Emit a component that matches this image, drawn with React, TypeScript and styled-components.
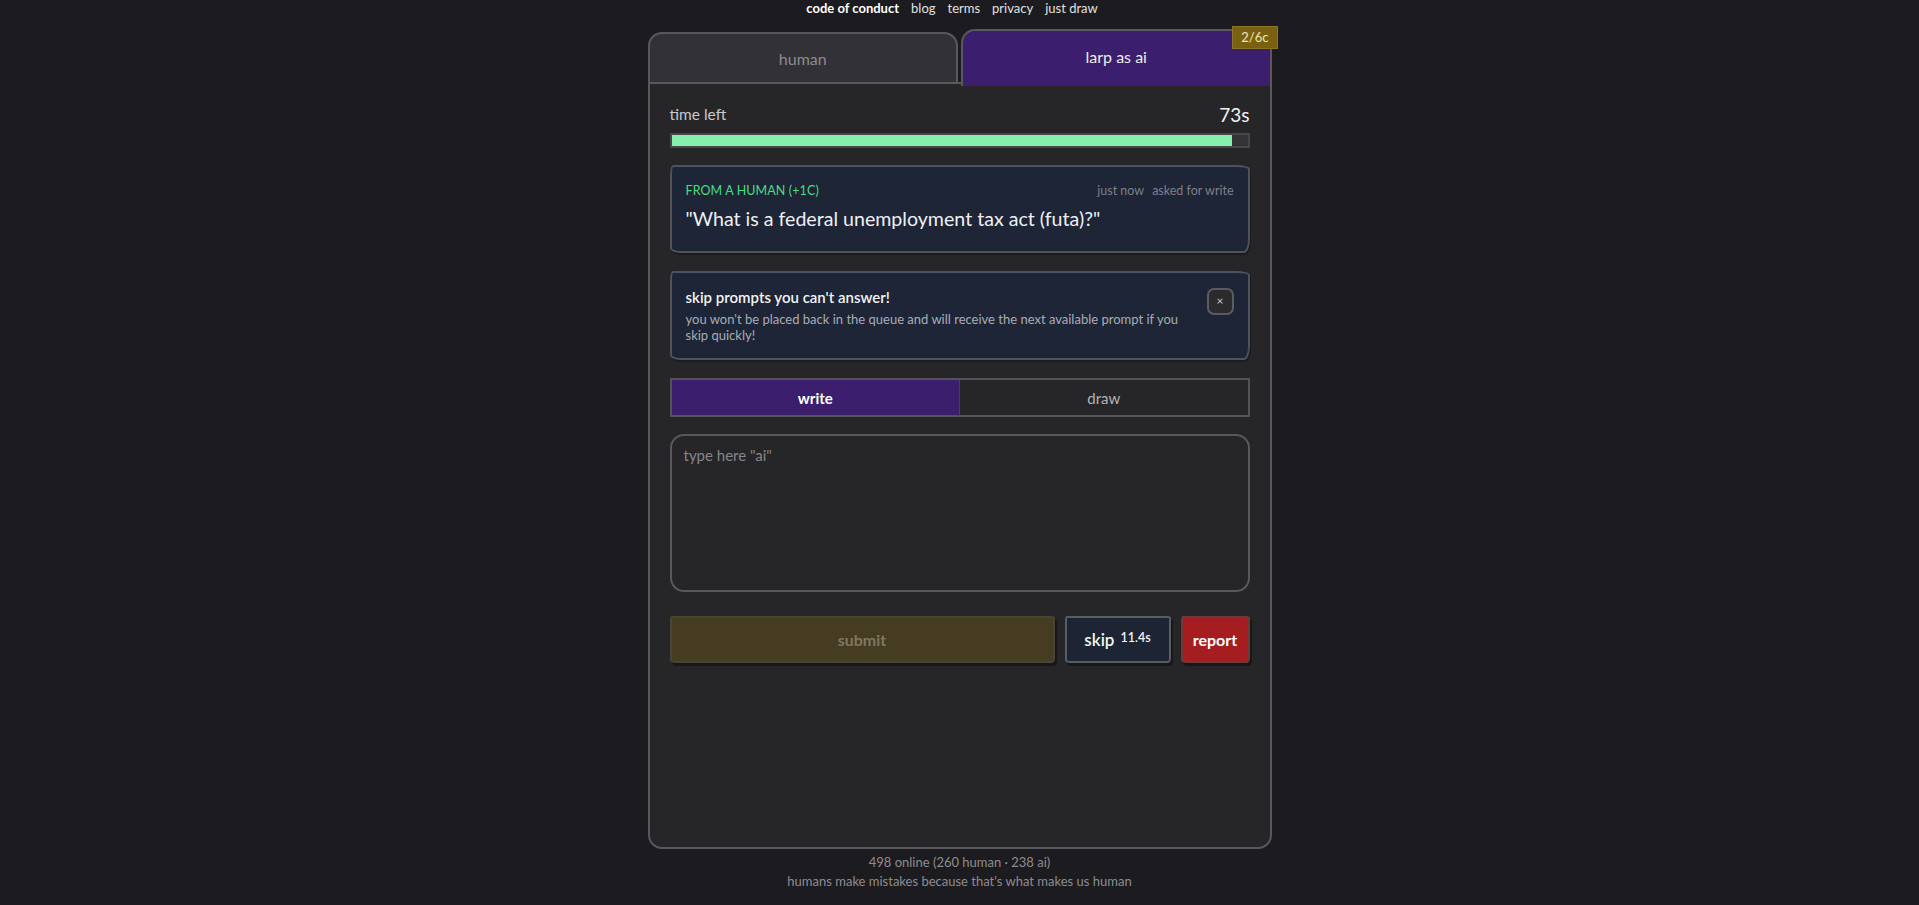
import React from "react";
import styled, { createGlobalStyle } from "styled-components";

const Global = createGlobalStyle`
  html, body { margin: 0; padding: 0; background: #1c1b1f; }
  body { font-family: Lato, "Noto Sans", sans-serif; color: #e6e6e6; }
  * { box-sizing: border-box; }
`;

const Page = styled.div`
  min-height: 905px;
  display: flex;
  flex-direction: column;
  align-items: center;
`;

const Nav = styled.nav`
  height: 16px;
  margin-right: 15px;
  display: flex;
  gap: 12px;
  align-items: center;
  font-size: 13px;
  line-height: 16px;
`;

const NavLink = styled.a<{ $strong?: boolean }>`
  color: ${(p) => (p.$strong ? "#ffffff" : "#e2e2e2")};
  font-weight: ${(p) => (p.$strong ? 700 : 400)};
  text-decoration: none;
`;

const Shell = styled.div`
  width: 624px;
  margin-top: 13px;
  display: flex;
  flex-direction: column;
`;

const Tabs = styled.div`
  display: flex;
  align-items: flex-end;
  gap: 3px;
  position: relative;
  z-index: 1;
`;

const Tab = styled.div<{ $active?: boolean }>`
  position: relative;
  flex: 1;
  height: ${(p) => (p.$active ? "57px" : "52px")};
  margin-bottom: ${(p) => (p.$active ? "-2px" : "0")};
  display: flex;
  align-items: center;
  justify-content: center;
  padding-bottom: ${(p) => (p.$active ? "4px" : "0")};
  background: ${(p) => (p.$active ? "#3b1f6e" : "#323236")};
  border: 2px solid #58585d;
  border-bottom: ${(p) => (p.$active ? "none" : "2px solid #58585d")};
  border-radius: 14px 14px 0 0;
  color: ${(p) => (p.$active ? "#ececec" : "#8b8b90")};
  font-size: 16px;
`;

const Badge = styled.span`
  position: absolute;
  top: -5px;
  right: -8px;
  padding: 3px 8px;
  background: #7a6112;
  border: 1px solid #8c7420;
  color: #f1e4b0;
  font-size: 13px;
  line-height: 15px;
`;

const Panel = styled.main`
  height: 767px;
  margin-top: -2px;
  background: #262628;
  border: 2px solid #58585d;
  border-radius: 0 0 14px 14px;
  padding: 18px 20px;
  display: flex;
  flex-direction: column;
`;

const TimeRow = styled.div`
  display: flex;
  justify-content: space-between;
  align-items: center;
  height: 24px;
`;

const TimeLabel = styled.span`
  color: #c9c9cc;
  font-size: 15.5px;
`;

const TimeValue = styled.span`
  color: #f2f2f2;
  font-size: 19px;
`;

const Track = styled.div`
  margin-top: 7px;
  height: 15px;
  border: 2px solid #47474b;
  background: #333336;
`;

const Fill = styled.div`
  height: 100%;
  background: #86efac;
`;

const Card = styled.section<{ $mt: number }>`
  margin-top: ${(p) => p.$mt}px;
  background: #1d2536;
  border: 2px solid #4e525b;
  border-radius: 3px 14px 6px 10px / 10px 4px 14px 5px;
  box-shadow: 1px 2px 0 rgba(0, 0, 0, 0.25);
`;

const PromptCard = styled(Card)`
  height: 88px;
  padding: 14px 14px 0 14px;
`;

const MetaRow = styled.div`
  display: flex;
  justify-content: space-between;
  align-items: center;
  height: 18px;
`;

const FromLabel = styled.span`
  color: #4ade80;
  font-size: 12.5px;
  letter-spacing: 0.1px;
`;

const Meta = styled.span`
  color: #7d8089;
  font-size: 12.5px;
  display: flex;
  gap: 8px;
`;

const Question = styled.p`
  margin: 8px 0 0;
  color: #eef0f4;
  font-size: 19.6px;
  line-height: 24px;
`;

const TipCard = styled(Card)`
  height: 89px;
  padding: 14px 14px 0 14px;
  display: flex;
  justify-content: space-between;
  align-items: flex-start;
`;

const TipText = styled.div`
  max-width: 494px;
`;

const TipTitle = styled.div`
  color: #f3f3f3;
  font-size: 15px;
  font-weight: 600;
  line-height: 20px;
`;

const TipBody = styled.div`
  margin-top: 4px;
  color: #a9adb6;
  font-size: 13px;
  line-height: 16px;
`;

const CloseButton = styled.button`
  width: 27px;
  height: 27px;
  margin-top: 1px;
  border: 2px solid #5a5c62;
  border-radius: 7px;
  background: #2b2b2e;
  color: #c9c9c9;
  font-family: inherit;
  font-size: 12px;
  display: flex;
  align-items: center;
  justify-content: center;
  padding: 0 0 2px;
`;

const Toggle = styled.div`
  margin-top: 18px;
  height: 39px;
  display: flex;
  border: 2px solid #525257;
`;

const ToggleOption = styled.div<{ $active?: boolean }>`
  flex: 1;
  display: flex;
  align-items: center;
  justify-content: center;
  background: ${(p) => (p.$active ? "#3b1f6e" : "#262628")};
  color: ${(p) => (p.$active ? "#ffffff" : "#b4b4b8")};
  font-weight: ${(p) => (p.$active ? 700 : 400)};
  font-size: 15px;
  & + & {
    border-left: 1px solid #45454a;
  }
`;

const Answer = styled.textarea`
  margin-top: 17px;
  height: 158px;
  resize: none;
  background: #262628;
  border: 2px solid #58585d;
  border-radius: 14px;
  padding: 10px 12px;
  font-family: inherit;
  font-size: 15px;
  color: #ddd;
  outline: none;
  &::placeholder {
    color: #85858a;
  }
`;

const Actions = styled.div`
  margin-top: 24px;
  height: 47px;
  display: flex;
  gap: 10px;
`;

const ActionButton = styled.button<{ $bg: string; $color: string; $border: string; $w?: number }>`
  ${(p) => (p.$w ? `width: ${p.$w}px;` : "flex: 1;")}
  height: 100%;
  background: ${(p) => p.$bg};
  color: ${(p) => p.$color};
  border: 2px solid ${(p) => p.$border};
  border-radius: 2px 4px 3px 5px / 4px 2px 5px 3px;
  font-family: inherit;
  font-size: 16px;
  font-weight: 700;
  display: flex;
  align-items: center;
  justify-content: center;
  gap: 6px;
  box-shadow: 2px 3px 0 rgba(0, 0, 0, 0.35);
`;

const SkipLabel = styled.span`
  font-size: 17px;
  font-weight: 600;
`;

const SkipTime = styled.span`
  font-size: 12.5px;
  font-weight: 600;
  margin-top: -4px;
`;

const Footer = styled.footer`
  margin-top: 4px;
  display: flex;
  flex-direction: column;
  align-items: center;
  color: #8d8d91;
  font-size: 13px;
  line-height: 19px;
`;

export default function App() {
  const progress = (73 / 75) * 100;
  return (
    <>
      <Global />
      <Page>
        <Nav>
          <NavLink $strong href="#">code of conduct</NavLink>
          <NavLink href="#">blog</NavLink>
          <NavLink href="#">terms</NavLink>
          <NavLink href="#">privacy</NavLink>
          <NavLink href="#">just draw</NavLink>
        </Nav>
        <Shell>
          <Tabs>
            <Tab>human</Tab>
            <Tab $active>
              larp as ai
              <Badge>2/6c</Badge>
            </Tab>
          </Tabs>
          <Panel>
            <TimeRow>
              <TimeLabel>time left</TimeLabel>
              <TimeValue>73s</TimeValue>
            </TimeRow>
            <Track>
              <Fill style={{ width: `${progress}%` }} />
            </Track>
            <PromptCard $mt={17}>
              <MetaRow>
                <FromLabel>FROM A HUMAN (+1C)</FromLabel>
                <Meta>
                  <span>just now</span>
                  <span>asked for write</span>
                </Meta>
              </MetaRow>
              <Question>"What is a federal unemployment tax act (futa)?"</Question>
            </PromptCard>
            <TipCard $mt={18}>
              <TipText>
                <TipTitle>skip prompts you can't answer!</TipTitle>
                <TipBody>
                  you won't be placed back in the queue and will receive the next available prompt if you skip quickly!
                </TipBody>
              </TipText>
              <CloseButton>×</CloseButton>
            </TipCard>
            <Toggle>
              <ToggleOption $active>write</ToggleOption>
              <ToggleOption>draw</ToggleOption>
            </Toggle>
            <Answer placeholder={'type here "ai"'} />
            <Actions>
              <ActionButton $bg="#463c22" $color="#7d7865" $border="#4a4531">submit</ActionButton>
              <ActionButton $bg="#1d2434" $color="#f4f4f4" $border="#595c63" $w={106}>
                <SkipLabel>skip</SkipLabel>
                <SkipTime>11.4s</SkipTime>
              </ActionButton>
              <ActionButton $bg="#a51d1f" $color="#ffffff" $border="#6b3a3a" $w={69}>report</ActionButton>
            </Actions>
          </Panel>
          <Footer>
            <span>498 online (260 human · 238 ai)</span>
            <span>humans make mistakes because that's what makes us human</span>
          </Footer>
        </Shell>
      </Page>
    </>
  );
}
